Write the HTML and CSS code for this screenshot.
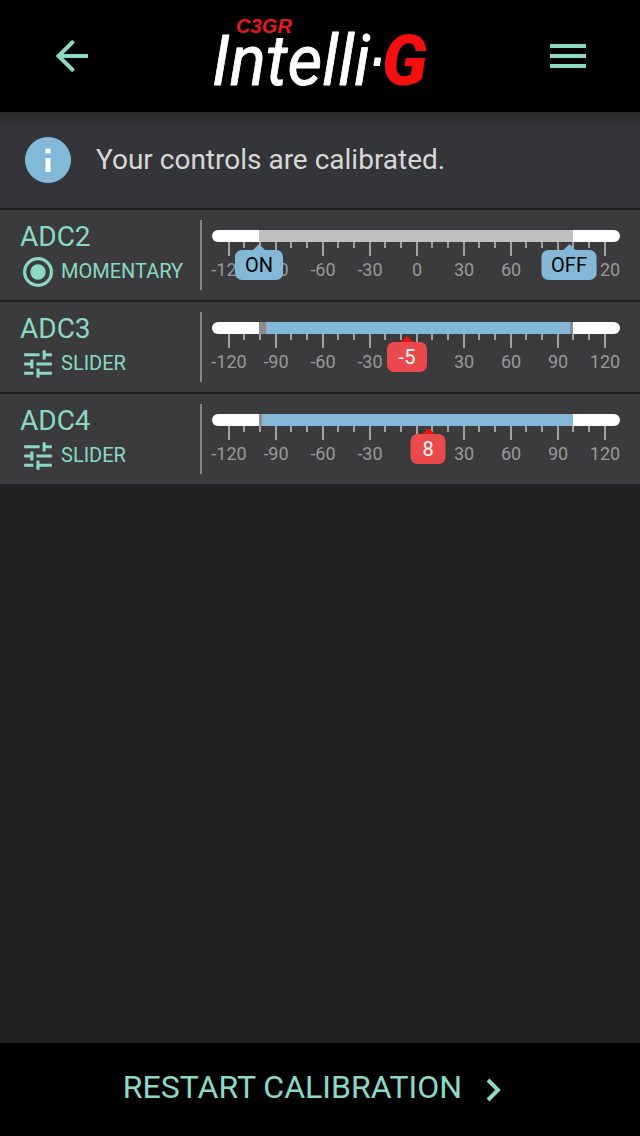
FILE: index.html
```html
<!DOCTYPE html>
<html lang="en">
  <head>
    <meta charset="UTF-8" />
    <meta name="viewport" content="width=device-width, initial-scale=1.0" />
    <title>Intelli-G Calibration</title>
    <link rel="stylesheet" href="styles.css">
  </head>
  <body>
    <!-- shared shapes -->
    <svg class="defs" width="0" height="0">
      <symbol id="ticks" viewBox="0 0 408 14">
        <path d="M17 0v14M64 0v14M111 0v14M158 0v14M205 0v14M252 0v14M299 0v14M346 0v14M393 0v14M32 0v6M48 0v6M79 0v6M95 0v6M126 0v6M142 0v6M173 0v6M189 0v6M220 0v6M236 0v6M267 0v6M283 0v6M314 0v6M330 0v6M361 0v6M377 0v6" stroke="#a0a0a0" stroke-width="2" />
      </symbol>
      <symbol id="tune" viewBox="1.6 1.6 20.8 20.8">
        <path d="M3 17v2h6v-2H3zM3 5v2h10V5H3zm10 16v-2h8v-2h-8v-2h-2v6h2zM7 9v2H3v2h4v2h2V9H7zm14 4v-2H11v2h10zm-6-4h2V7h4V5h-4V3h-2v6z" fill="currentColor" />
      </symbol>
    </svg>

    <header class="header">
      <button class="icon-button" type="button" aria-label="Back">
        <svg width="36" height="36" viewBox="0 0 36 36" fill="none" stroke="currentColor" stroke-width="4">
          <path d="M34 18H5" />
          <path d="M18.500 4.300L4.500 18l14 13.700" stroke-width="4" stroke-linecap="round" />
        </svg>
      </button>
      <svg class="logo" width="220" height="80" viewBox="0 0 220 80">
        <text class="logo-model" x="25" y="21" textLength="56" lengthAdjust="spacingAndGlyphs">C3GR</text>
        <text class="logo-name" x="1" y="72.500" textLength="158" lengthAdjust="spacingAndGlyphs">Intelli</text>
        <path d="M164.500 46.500h4.500l-1 6.500h-4.500z" fill="#fff" stroke="#fff" stroke-width="2" stroke-linejoin="round" />
        <text class="logo-g" x="171" y="72.500" textLength="45" lengthAdjust="spacingAndGlyphs">G</text>
      </svg>
      <button class="icon-button" type="button" aria-label="Menu">
        <svg width="36" height="24" viewBox="0 0 36 24" fill="currentColor">
          <path d="M0 0h36v4H0zM0 10h36v4H0zM0 20h36v4H0z" />
        </svg>
      </button>
    </header>

    <div class="status">
      <svg width="46" height="46" viewBox="0 0 46 46">
        <circle cx="23" cy="23" r="23" fill="#84b8d9" />
        <path d="M20.500 11.500h5v5h-5zM20.500 21h5v14h-5z" fill="#fff" />
      </svg>
      <span class="status-text">Your controls are calibrated.</span>
    </div>

    <main class="controls">
      <section class="control">
        <div class="control-info">
          <div class="control-name">ADC2</div>
          <div class="control-type">
            <svg width="32" height="32" viewBox="0 0 32 32">
              <circle cx="16" cy="16" r="13.400" fill="none" stroke="currentColor" stroke-width="3.200" />
              <circle cx="16" cy="16" r="7.700" fill="currentColor" />
            </svg>
            <span>MOMENTARY</span>
          </div>
        </div>
        <div class="gauge">
          <div class="track">
            <div class="limits">
              <div class="range idle" style="width: 100%"></div>
            </div>
          </div>
          <svg class="ticks" width="408" height="14"><use href="#ticks" /></svg>
          <div class="labels">
            <span>-120</span><span>-90</span><span>-60</span><span>-30</span><span>0</span><span>30</span><span>60</span><span>90</span><span>120</span>
          </div>
          <div class="badge blue" style="left: 47px; width: 48px">ON</div>
          <div class="badge blue" style="left: 357px; width: 55px">OFF</div>
        </div>
      </section>

      <section class="control">
        <div class="control-info">
          <div class="control-name">ADC3</div>
          <div class="control-type">
            <svg width="32" height="32"><use href="#tune" /></svg>
            <span>SLIDER</span>
          </div>
        </div>
        <div class="gauge">
          <div class="track">
            <div class="limits">
              <div class="range" style="margin-left: 7px; width: 304px"></div>
            </div>
          </div>
          <svg class="ticks" width="408" height="14"><use href="#ticks" /></svg>
          <div class="labels">
            <span>-120</span><span>-90</span><span>-60</span><span>-30</span><span>0</span><span>30</span><span>60</span><span>90</span><span>120</span>
          </div>
          <div class="badge red" style="left: 195px; width: 40px">-5</div>
        </div>
      </section>

      <section class="control">
        <div class="control-info">
          <div class="control-name">ADC4</div>
          <div class="control-type">
            <svg width="32" height="32"><use href="#tune" /></svg>
            <span>SLIDER</span>
          </div>
        </div>
        <div class="gauge">
          <div class="track">
            <div class="limits">
              <div class="range" style="margin-left: 3px; width: 311px"></div>
            </div>
          </div>
          <svg class="ticks" width="408" height="14"><use href="#ticks" /></svg>
          <div class="labels">
            <span>-120</span><span>-90</span><span>-60</span><span>-30</span><span>0</span><span>30</span><span>60</span><span>90</span><span>120</span>
          </div>
          <div class="badge red" style="left: 216px; width: 35px">8</div>
        </div>
      </section>
    </main>

    <button class="restart" type="button">
      <span>RESTART CALIBRATION</span>
      <svg width="16" height="24" viewBox="0 0 16 24" fill="none" stroke="currentColor" stroke-width="4">
        <path d="M2 2l10 10L2 22" />
      </svg>
    </button>
  </body>
</html>
```
FILE: styles.css
```css
body,
html {
  margin: 0;
  padding: 0;
  height: 100%;
  font-family: Roboto, "Liberation Sans", sans-serif;
  background-color: #222222;
  color: #8bd9c5;
}

body {
  display: flex;
  flex-direction: column;
  overflow: hidden;
}

.defs {
  display: none;
}

.header {
  display: flex;
  justify-content: space-between;
  align-items: center;
  box-sizing: border-box;
  height: 112px;
  padding: 0 54px;
  background-color: #000000;
}

.icon-button {
  display: flex;
  padding: 0;
  background: none;
  border: none;
  color: #8bd9c5;
  cursor: pointer;
}

.logo {
  margin-top: -8px;
  margin-left: 2px;
  overflow: visible;
}

.logo-model {
  font: italic bold 19.5px "Liberation Sans", sans-serif;
  fill: #e5191b;
}

.logo-name {
  font: italic 400 70px Roboto, sans-serif;
  fill: #ffffff;
  stroke: #ffffff;
  stroke-width: 0.8px;
  stroke-linejoin: round;
}

.logo-g {
  font: italic 900 70px Roboto, sans-serif;
  fill: #f5100f;
}

.status {
  display: flex;
  align-items: center;
  gap: 25px;
  height: 96px;
  padding-left: 25px;
  background: linear-gradient(#27282a, #343538 14px);
  border-bottom: 2px solid #222224;
}

.status-text {
  margin-top: -2px;
  font-size: 28px;
  color: #d8d8d8;
}

.controls {
  flex: 1;
}

.control {
  display: flex;
  box-sizing: border-box;
  height: 92px;
  padding: 10px 0;
  background-color: #3b3b3d;
  border-bottom: 2px solid #222224;
}

.control-info {
  box-sizing: border-box;
  width: 202px;
  padding-left: 20px;
  border-right: 2px solid #868686;
}

.control-name {
  height: 36px;
  line-height: 33px;
  font-size: 28px;
}

.control-type {
  display: flex;
  align-items: center;
  gap: 7px;
  margin-left: 2px;
  font-size: 20px;
  line-height: 30px;
}

.control-type span {
  margin-top: -2px;
}

.gauge {
  position: relative;
  width: 408px;
  padding-top: 10px;
  margin-left: 10px;
}

.track {
  height: 12px;
  padding: 0 47px;
  border-radius: 6px;
  background-color: #ffffff;
}

.limits {
  height: 12px;
  background-color: #8c8c8c;
}

.range {
  height: 12px;
  background-color: #84b8d9;
}

.range.idle {
  background-color: #c0c0c0;
}

.ticks {
  display: block;
}

.labels {
  display: grid;
  grid-template-columns: repeat(9, 47px);
  margin: 3px 0 0 -6.5px;
  width: 423px;
  font-size: 18px;
  line-height: 22px;
  text-align: center;
  color: #999999;
}

/* value callout hanging under the track */
.badge {
  position: absolute;
  top: 30px;
  height: 30px;
  line-height: 30px;
  border-radius: 7px;
  transform: translateX(-50%);
  font-size: 20px;
  text-align: center;
}

.badge::before {
  content: "";
  position: absolute;
  top: -6px;
  left: 50%;
  margin-left: -6px;
  border: 6px solid transparent;
  border-top: 0;
  border-bottom-color: #84b8d9;
}

.badge.blue {
  background-color: #84b8d9;
  color: #000000;
}

.badge.red {
  background-color: #ea4a4b;
  color: #ffffff;
}

.badge.red::before {
  border-bottom-color: #f01010;
}

.restart {
  display: flex;
  align-items: center;
  justify-content: center;
  gap: 24px;
  height: 93px;
  padding: 0 15px 6px 0;
  background-color: #000000;
  border: none;
  color: #8bd9c5;
  font-family: inherit;
  font-size: 32px;
  cursor: pointer;
}

.restart svg {
  margin-top: 7px;
}
```
